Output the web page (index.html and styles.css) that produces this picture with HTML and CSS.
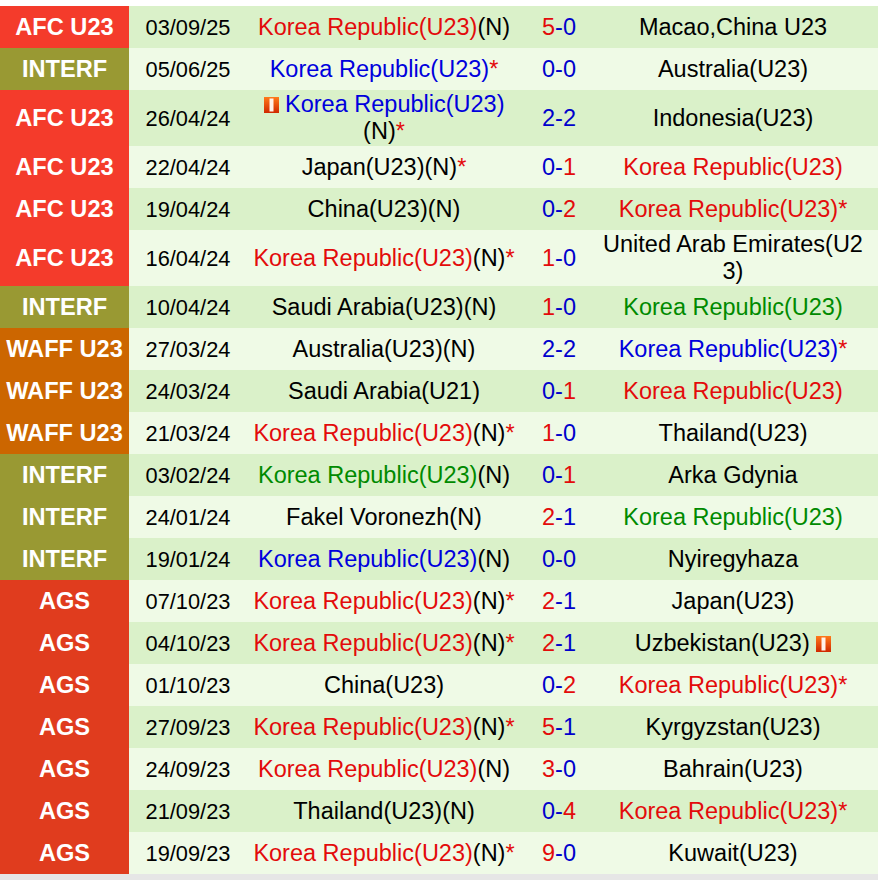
FILE: index.html
```html
<!DOCTYPE html>
<html>
<head>
<meta charset="utf-8">
<link rel="stylesheet" href="styles.css">
</head>
<body>
<div class="table">
  <div class="row g"><div class="lg afc"><span>AFC U23</span></div><div class="dt"><span>03/09/25</span></div><div class="hm"><span><span class="r">Korea Republic(U23)</span>(N)</span></div><div class="sc"><span><span class="r">5</span>-0</span></div><div class="aw"><span>Macao,China U23</span></div></div>
  <div class="row p"><div class="lg itf"><span>INTERF</span></div><div class="dt"><span>05/06/25</span></div><div class="hm"><span><span class="b">Korea Republic(U23)</span><span class="r">*</span></span></div><div class="sc"><span>0-0</span></div><div class="aw"><span>Australia(U23)</span></div></div>
  <div class="row g"><div class="lg afc"><span>AFC U23</span></div><div class="dt"><span>26/04/24</span></div><div class="hm"><span><svg class="card" viewBox="0 0 15 16" width="15" height="16"><defs><linearGradient id="cg1" x1="0" y1="0" x2="0" y2="1"><stop offset="0" stop-color="#ff7a1a"/><stop offset="1" stop-color="#d02800"/></linearGradient></defs><rect x="0" y="0" width="15" height="16" fill="url(#cg1)"/><rect x="5.5" y="1.5" width="4" height="13" fill="#fff2ea"/></svg> <span class="b">Korea Republic(U23)</span>(N)<span class="r">*</span></span></div><div class="sc"><span>2-2</span></div><div class="aw"><span>Indonesia(U23)</span></div></div>
  <div class="row p"><div class="lg afc"><span>AFC U23</span></div><div class="dt"><span>22/04/24</span></div><div class="hm"><span>Japan(U23)(N)<span class="r">*</span></span></div><div class="sc"><span>0-<span class="r">1</span></span></div><div class="aw"><span><span class="r">Korea Republic(U23)</span></span></div></div>
  <div class="row g"><div class="lg afc"><span>AFC U23</span></div><div class="dt"><span>19/04/24</span></div><div class="hm"><span>China(U23)(N)</span></div><div class="sc"><span>0-<span class="r">2</span></span></div><div class="aw"><span><span class="r">Korea Republic(U23)*</span></span></div></div>
  <div class="row p"><div class="lg afc"><span>AFC U23</span></div><div class="dt"><span>16/04/24</span></div><div class="hm"><span><span class="r">Korea Republic(U23)</span>(N)<span class="r">*</span></span></div><div class="sc"><span><span class="r">1</span>-0</span></div><div class="aw"><span>United Arab Emirates(U23)</span></div></div>
  <div class="row g"><div class="lg itf"><span>INTERF</span></div><div class="dt"><span>10/04/24</span></div><div class="hm"><span>Saudi Arabia(U23)(N)</span></div><div class="sc"><span><span class="r">1</span>-0</span></div><div class="aw"><span><span class="gr">Korea Republic(U23)</span></span></div></div>
  <div class="row p"><div class="lg waff"><span>WAFF U23</span></div><div class="dt"><span>27/03/24</span></div><div class="hm"><span>Australia(U23)(N)</span></div><div class="sc"><span>2-2</span></div><div class="aw"><span><span class="b">Korea Republic(U23)</span><span class="r">*</span></span></div></div>
  <div class="row g"><div class="lg waff"><span>WAFF U23</span></div><div class="dt"><span>24/03/24</span></div><div class="hm"><span>Saudi Arabia(U21)</span></div><div class="sc"><span>0-<span class="r">1</span></span></div><div class="aw"><span><span class="r">Korea Republic(U23)</span></span></div></div>
  <div class="row p"><div class="lg waff"><span>WAFF U23</span></div><div class="dt"><span>21/03/24</span></div><div class="hm"><span><span class="r">Korea Republic(U23)</span>(N)<span class="r">*</span></span></div><div class="sc"><span><span class="r">1</span>-0</span></div><div class="aw"><span>Thailand(U23)</span></div></div>
  <div class="row g"><div class="lg itf"><span>INTERF</span></div><div class="dt"><span>03/02/24</span></div><div class="hm"><span><span class="gr">Korea Republic(U23)</span>(N)</span></div><div class="sc"><span>0-<span class="r">1</span></span></div><div class="aw"><span>Arka Gdynia</span></div></div>
  <div class="row p"><div class="lg itf"><span>INTERF</span></div><div class="dt"><span>24/01/24</span></div><div class="hm"><span>Fakel Voronezh(N)</span></div><div class="sc"><span><span class="r">2</span>-1</span></div><div class="aw"><span><span class="gr">Korea Republic(U23)</span></span></div></div>
  <div class="row g"><div class="lg itf"><span>INTERF</span></div><div class="dt"><span>19/01/24</span></div><div class="hm"><span><span class="b">Korea Republic(U23)</span>(N)</span></div><div class="sc"><span>0-0</span></div><div class="aw"><span>Nyiregyhaza</span></div></div>
  <div class="row p"><div class="lg ags"><span>AGS</span></div><div class="dt"><span>07/10/23</span></div><div class="hm"><span><span class="r">Korea Republic(U23)</span>(N)<span class="r">*</span></span></div><div class="sc"><span><span class="r">2</span>-1</span></div><div class="aw"><span>Japan(U23)</span></div></div>
  <div class="row g"><div class="lg ags"><span>AGS</span></div><div class="dt"><span>04/10/23</span></div><div class="hm"><span><span class="r">Korea Republic(U23)</span>(N)<span class="r">*</span></span></div><div class="sc"><span><span class="r">2</span>-1</span></div><div class="aw"><span>Uzbekistan(U23) <svg class="card" viewBox="0 0 15 16" width="15" height="16"><defs><linearGradient id="cg2" x1="0" y1="0" x2="0" y2="1"><stop offset="0" stop-color="#ff7a1a"/><stop offset="1" stop-color="#d02800"/></linearGradient></defs><rect x="0" y="0" width="15" height="16" fill="url(#cg2)"/><rect x="5.5" y="1.5" width="4" height="13" fill="#fff2ea"/></svg></span></div></div>
  <div class="row p"><div class="lg ags"><span>AGS</span></div><div class="dt"><span>01/10/23</span></div><div class="hm"><span>China(U23)</span></div><div class="sc"><span>0-<span class="r">2</span></span></div><div class="aw"><span><span class="r">Korea Republic(U23)*</span></span></div></div>
  <div class="row g"><div class="lg ags"><span>AGS</span></div><div class="dt"><span>27/09/23</span></div><div class="hm"><span><span class="r">Korea Republic(U23)</span>(N)<span class="r">*</span></span></div><div class="sc"><span><span class="r">5</span>-1</span></div><div class="aw"><span>Kyrgyzstan(U23)</span></div></div>
  <div class="row p"><div class="lg ags"><span>AGS</span></div><div class="dt"><span>24/09/23</span></div><div class="hm"><span><span class="r">Korea Republic(U23)</span>(N)</span></div><div class="sc"><span><span class="r">3</span>-0</span></div><div class="aw"><span>Bahrain(U23)</span></div></div>
  <div class="row g"><div class="lg ags"><span>AGS</span></div><div class="dt"><span>21/09/23</span></div><div class="hm"><span>Thailand(U23)(N)</span></div><div class="sc"><span>0-<span class="r">4</span></span></div><div class="aw"><span><span class="r">Korea Republic(U23)*</span></span></div></div>
  <div class="row p"><div class="lg ags"><span>AGS</span></div><div class="dt"><span>19/09/23</span></div><div class="hm"><span><span class="r">Korea Republic(U23)</span>(N)<span class="r">*</span></span></div><div class="sc"><span><span class="r">9</span>-0</span></div><div class="aw"><span>Kuwait(U23)</span></div></div>
  <div class="foot"></div>
</div>
</body>
</html>
```
FILE: styles.css
```css
html, body {
  margin: 0;
  padding: 0;
  background: #ffffff;
}
body {
  padding-top: 6px;
  font-family: "Liberation Sans", Arial, sans-serif;
  color: #000;
}
.table {
  width: 878px;
}
.row {
  display: grid;
  grid-template-columns: 129px 116px 285px 58px 290px;
  min-height: 42px;
  font-size: 23.5px;
  line-height: 27px;
}
.row.g { background: #daf1c9; }
.row.p { background: #effae6; }
.row > div {
  display: flex;
  align-items: center;
  justify-content: center;
  text-align: center;
  padding: 1px 0;
}
.lg {
  color: #fff;
  font-weight: bold;
  font-size: 23.6px;
}
.afc { background: #f43b2b; }
.itf { background: #999933; }
.waff { background: #cc6600; }
.ags { background: #e03c1e; }
.row > .dt {
  font-size: 21.8px;
  padding-left: 2px;
}
.row > .hm {
  padding: 1px 11px 1px 4px;
}
.sc { color: #0000cc; }
.row > .aw {
  padding: 1px 10px;
  word-break: break-all;
}
.r { color: #e30b0b; }
.b { color: #0000dd; }
.gr { color: #008a00; }
.card {
  vertical-align: -1px;
}
.foot {
  height: 10px;
  background: #e6e6e6;
}
```
